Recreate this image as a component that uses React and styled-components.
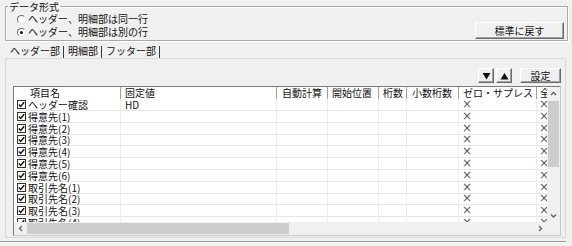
import React from 'react';
import styled, { createGlobalStyle } from 'styled-components';

const GlobalStyle = createGlobalStyle`
  html, body {
    margin: 0;
    padding: 0;
    background: #f0f0f0;
  }
  body {
    font-family: "Noto Sans CJK JP", "Noto Sans", sans-serif;
    font-size: 10px;
    line-height: 12px;
    color: #111;
  }
  * { box-sizing: border-box; }
`;

const Window = styled.div`
  width: 572px;
  height: 246px;
  overflow: hidden;
  background: #f0f0f0;
  display: flex;
  flex-direction: column;
`;

const GroupBox = styled.div`
  position: relative;
  margin: 6px 4px 0 5px;
  height: 35px;
  border: 1px solid #a8a8a8;
  box-shadow: inset 1px 1px #fff, 1px 1px #fff;
  display: flex;
  justify-content: space-between;
  align-items: flex-end;
  padding: 6px 3px 1px 11px;
`;

const Legend = styled.span`
  position: absolute;
  top: -6px;
  left: 2px;
  padding: 0 1px;
  background: #f0f0f0;
`;

const RadioList = styled.div`
  display: flex;
  flex-direction: column;
  gap: 1px;
  align-self: stretch;
`;

const RadioRow = styled.label`
  display: flex;
  align-items: center;
  gap: 2px;
  height: 12px;
`;

const RadioDot = styled.span`
  position: relative;
  width: 9px;
  height: 9px;
  border-radius: 50%;
  border: 1px solid;
  border-color: #6e6e6e #e8e8e8 #e8e8e8 #6e6e6e;
  background: #fff;
  &::after {
    content: '';
    display: ${(p) => (p.$checked ? 'block' : 'none')};
    position: absolute;
    left: 2px;
    top: 2px;
    width: 3px;
    height: 3px;
    border-radius: 50%;
    background: #111;
  }
`;

const Button = styled.button`
  font: inherit;
  color: #111;
  width: ${(p) => p.$w}px;
  height: ${(p) => p.$h}px;
  padding: 0;
  background: #f0f0f0;
  border: 1px solid;
  border-color: #fff #6a6a6a #6a6a6a #fff;
  box-shadow: inset -1px -1px #a0a0a0;
  display: flex;
  align-items: center;
  justify-content: center;
`;

const TabRow = styled.div`
  display: flex;
  margin: 3px 0 0 6px;
  height: 14px;
`;

const Tab = styled.div`
  padding: 0 3px 0 4px;
  border-right: 1px solid #3c3c3c;
  height: 12px;
  margin-top: 2px;
  line-height: 10px;
`;

const TabPanel = styled.div`
  margin: 0 6px 0 5px;
  height: 180px;
  border: 1px solid #d8d8d8;
  display: flex;
  flex-direction: column;
  padding: 0 4px 1px 7px;
`;

const Toolbar = styled.div`
  display: flex;
  justify-content: flex-end;
  align-items: center;
  gap: 2px;
  padding: 9px 0 0 0;
  height: 24px;
  margin-bottom: 3px;
  & > :last-child {
    margin-left: 6px;
  }
`;

const Grid = styled.div`
  flex: 1;
  border: 1px solid #7c7c7c;
  border-right-color: #c8c8c8;
  border-bottom-color: #c8c8c8;
  background: #fff;
  display: flex;
  flex-direction: column;
  overflow: hidden;
`;

const GridMain = styled.div`
  flex: 1;
  display: flex;
  min-height: 0;
`;

const Sheet = styled.div`
  flex: 1;
  overflow: hidden;
  min-width: 0;
`;

const COLS = [107, 156, 51, 51, 28, 52, 78, 40];
const template = COLS.map((w) => `${w}px`).join(' ');

const HeaderRow = styled.div`
  display: grid;
  grid-template-columns: ${template};
  height: 12px;
  background: #fff;
`;

const HeadCell = styled.div`
  border-right: 1px solid #a0a0a0;
  padding-left: ${(p) => p.$pad}px;
  white-space: nowrap;
  line-height: 12px;
`;

const Row = styled.div`
  display: grid;
  grid-template-columns: ${template};
  height: 11.8px;
`;

const Cell = styled.div`
  border-right: 1px solid #ececec;
  border-bottom: 1px solid #e6e6e6;
  padding-left: ${(p) => p.$pad || 0}px;
  display: flex;
  align-items: center;
  gap: 2px;
  white-space: nowrap;
  line-height: 11px;
`;

const Mark = styled.span`
  color: #5a5a5a;
  font-family: "DejaVu Sans", sans-serif;
  font-size: 12px;
  line-height: 11px;
`;

const Check = styled.span`
  width: 9px;
  height: 9px;
  border: 1px solid #333;
  background: #fff;
  display: flex;
  align-items: center;
  justify-content: center;
  flex: none;
`;

const VScroll = styled.div`
  width: 13px;
  background: #f0f0f0;
  display: flex;
  flex-direction: column;
`;

const HScroll = styled.div`
  height: 13px;
  background: #f0f0f0;
  display: flex;
`;

const Arrow = styled.div`
  width: 13px;
  height: 13px;
  flex: none;
  display: flex;
  align-items: center;
  justify-content: center;
`;

const VTrack = styled.div`
  flex: 1;
  padding: 1px 1px 0 1px;
`;

const VThumb = styled.div`
  height: 66px;
  background: #cdcdcd;
`;

const HTrack = styled.div`
  flex: 1;
  padding: 1px 0 1px 0;
`;

const HThumb = styled.div`
  width: 262px;
  height: 100%;
  background: #cdcdcd;
`;

const Corner = styled.div`
  width: 13px;
  background: #f0f0f0;
`;

const BottomRule = styled.div`
  margin-top: 3px;
  height: 2px;
  border-top: 1px solid #9a9a9a;
  border-bottom: 1px solid #fff;
  margin-right: 6px;
`;

const Chevron = ({ dir }) => {
  const pts = {
    up: '1,5 3.5,2.5 6,5',
    down: '1,2.5 3.5,5 6,2.5',
    left: '5,1 2.5,3.5 5,6',
    right: '2,1 4.5,3.5 2,6',
  }[dir];
  return (
    <svg width="7" height="7" viewBox="0 0 7 7">
      <polyline points={pts} fill="none" stroke="#606060" strokeWidth="1.3" />
    </svg>
  );
};

const Triangle = ({ down }) => (
  <svg width="9" height="8" viewBox="0 0 9 8">
    <polygon points={down ? '0.5,1 8.5,1 4.5,7.5' : '0.5,7.5 8.5,7.5 4.5,1'} fill="#111" />
  </svg>
);

const Tick = () => (
  <svg width="7" height="7" viewBox="0 0 7 7">
    <polyline points="0.8,3.4 2.7,5.4 6.2,1.2" fill="none" stroke="#111" strokeWidth="1.4" />
  </svg>
);

const headers = [
  ['項目名', 16],
  ['固定値', 4],
  ['自動計算', 5],
  ['開始位置', 4],
  ['桁数', 4],
  ['小数桁数', 5],
  ['ゼロ・サプレス', 4],
  ['全', 3],
];

const rows = [
  ['ヘッダー確認', 'HD'],
  ['得意先(1)', ''],
  ['得意先(2)', ''],
  ['得意先(3)', ''],
  ['得意先(4)', ''],
  ['得意先(5)', ''],
  ['得意先(6)', ''],
  ['取引先名(1)', ''],
  ['取引先名(2)', ''],
  ['取引先名(3)', ''],
  ['取引先名(4)', ''],
];

const App = () => (
  <Window>
    <GlobalStyle />
    <GroupBox>
      <Legend>データ形式</Legend>
      <RadioList>
        <RadioRow>
          <RadioDot />
          ヘッダー、明細部は同一行
        </RadioRow>
        <RadioRow>
          <RadioDot $checked />
          ヘッダー、明細部は別の行
        </RadioRow>
      </RadioList>
      <Button $w={89} $h={17}>標準に戻す</Button>
    </GroupBox>
    <TabRow>
      <Tab>ヘッダー部</Tab>
      <Tab>明細部</Tab>
      <Tab>フッター部</Tab>
    </TabRow>
    <TabPanel>
      <Toolbar>
        <Button $w={16} $h={15}><Triangle down /></Button>
        <Button $w={16} $h={15}><Triangle /></Button>
        <Button $w={41} $h={15}>設定</Button>
      </Toolbar>
      <Grid>
        <GridMain>
          <Sheet>
            <HeaderRow>
              {headers.map(([t, pad]) => (
                <HeadCell key={t} $pad={pad}>{t}</HeadCell>
              ))}
            </HeaderRow>
            {rows.map(([name, fixed]) => (
              <Row key={name}>
                <Cell $pad={3}>
                  <Check><Tick /></Check>
                  {name}
                </Cell>
                <Cell $pad={4}>{fixed}</Cell>
                <Cell />
                <Cell />
                <Cell />
                <Cell />
                <Cell $pad={3}><Mark>×</Mark></Cell>
                <Cell $pad={2}><Mark>×</Mark></Cell>
              </Row>
            ))}
          </Sheet>
          <VScroll>
            <Arrow><Chevron dir="up" /></Arrow>
            <VTrack><VThumb /></VTrack>
            <Arrow><Chevron dir="down" /></Arrow>
          </VScroll>
        </GridMain>
        <HScroll>
          <Arrow><Chevron dir="left" /></Arrow>
          <HTrack><HThumb /></HTrack>
          <Arrow><Chevron dir="right" /></Arrow>
          <Corner />
        </HScroll>
      </Grid>
    </TabPanel>
    <BottomRule />
  </Window>
);

export default App;
